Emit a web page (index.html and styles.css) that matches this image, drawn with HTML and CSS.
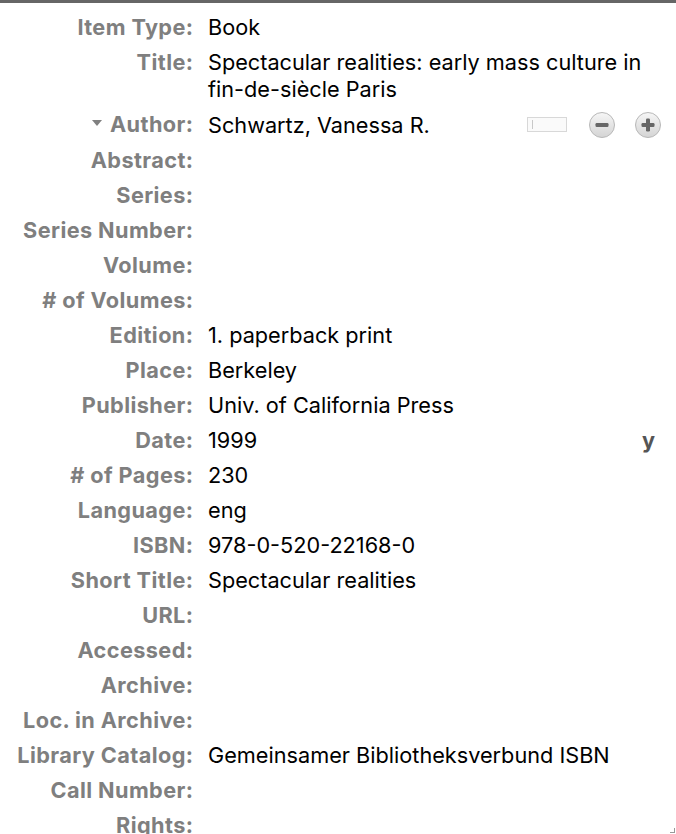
FILE: index.html
```html
<!DOCTYPE html>
<html>
<head>
<meta charset="utf-8">
<link rel="stylesheet" href="styles.css">
</head>
<body>
<div class="pane">
  <div class="fields">
    <div class="label">Item Type:</div><div class="value">Book</div>
    <div class="label">Title:</div><div class="value">Spectacular realities: early mass culture in <span class="nowrap">fin-de-siècle</span> Paris</div>
    <div class="label"><span class="twisty"></span>Author:</div>
    <div class="value author">
      <span class="name">Schwartz, Vanessa R.</span>
      <span class="mode"><span class="caret"></span></span>
      <span class="circle-btn">
        <svg viewBox="0 0 28 28" width="28" height="28"><defs><linearGradient id="g1" x1="0" y1="0" x2="0" y2="1"><stop offset="0" stop-color="#f6f6f6"/><stop offset="1" stop-color="#d4d4d4"/></linearGradient></defs><circle cx="14" cy="14" r="12.5" fill="url(#g1)" stroke="#b8b8b8"/><rect x="7.5" y="12" width="13" height="4" rx="1.2" fill="#666"/></svg>
      </span>
      <span class="circle-btn">
        <svg viewBox="0 0 28 28" width="28" height="28"><defs><linearGradient id="g2" x1="0" y1="0" x2="0" y2="1"><stop offset="0" stop-color="#f6f6f6"/><stop offset="1" stop-color="#d4d4d4"/></linearGradient></defs><circle cx="14" cy="14" r="12.5" fill="url(#g2)" stroke="#b8b8b8"/><rect x="7.5" y="12" width="13" height="4" rx="1.2" fill="#666"/><rect x="12" y="7.5" width="4" height="13" rx="1.2" fill="#666"/></svg>
      </span>
    </div>
    <div class="label">Abstract:</div><div class="value"></div>
    <div class="label">Series:</div><div class="value"></div>
    <div class="label">Series Number:</div><div class="value"></div>
    <div class="label">Volume:</div><div class="value"></div>
    <div class="label"># of Volumes:</div><div class="value"></div>
    <div class="label">Edition:</div><div class="value">1. paperback print</div>
    <div class="label">Place:</div><div class="value">Berkeley</div>
    <div class="label">Publisher:</div><div class="value">Univ. of California Press</div>
    <div class="label">Date:</div><div class="value date"><span>1999</span><span class="ymd">y</span></div>
    <div class="label"># of Pages:</div><div class="value">230</div>
    <div class="label">Language:</div><div class="value">eng</div>
    <div class="label">ISBN:</div><div class="value">978-0-520-22168-0</div>
    <div class="label">Short Title:</div><div class="value">Spectacular realities</div>
    <div class="label">URL:</div><div class="value"></div>
    <div class="label">Accessed:</div><div class="value"></div>
    <div class="label">Archive:</div><div class="value"></div>
    <div class="label">Loc. in Archive:</div><div class="value"></div>
    <div class="label">Library Catalog:</div><div class="value">Gemeinsamer Bibliotheksverbund ISBN</div>
    <div class="label">Call Number:</div><div class="value"></div>
    <div class="label">Rights:</div><div class="value"></div>
  </div>
  <span class="grip"></span>
</div>
</body>
</html>
```
FILE: styles.css
```css
html, body {
  margin: 0;
  padding: 0;
  background: #fff;
}
body {
  width: 676px;
  height: 834px;
  overflow: hidden;
  font-family: Inter, "Liberation Sans", Arial, sans-serif;
  font-size: 21.7px;
}
.pane {
  position: relative;
  height: 834px;
  box-sizing: border-box;
  border-top: 3px solid #666;
  padding: 7px 14px 0 0;
}
.fields {
  display: grid;
  grid-template-columns: 193px 1fr;
  column-gap: 15px;
}
.label, .value {
  padding: 4px 0;
  line-height: 27px;
  min-height: 27px;
}
.label {
  text-align: right;
  font-weight: bold;
  color: #7f7f7f;
  white-space: nowrap;
  letter-spacing: 0.4px;
  margin-right: -0.4px;
}
.value {
  color: #000;
}
.nowrap {
  white-space: nowrap;
}
.twisty {
  display: inline-block;
  width: 0;
  height: 0;
  border-left: 5px solid transparent;
  border-right: 5px solid transparent;
  border-top: 6px solid #808080;
  vertical-align: middle;
  margin-right: 8px;
  position: relative;
  top: -3px;
}
.author {
  display: flex;
  align-items: center;
}
.author .name {
  flex: 1;
}
.mode {
  width: 38px;
  height: 13px;
  border: 1px solid #d8d8d8;
  background: #fafafa;
  margin-right: 3px;
  position: relative;
  top: -1px;
}
.caret {
  display: block;
  width: 1px;
  height: 9px;
  background: #c8c8c8;
  margin: 2px 0 0 4px;
}
.circle-btn {
  width: 28px;
  height: 28px;
  display: block;
  margin-left: 18px;
}
.circle-btn svg {
  display: block;
}
.date {
  display: flex;
  justify-content: space-between;
}
.ymd {
  font-weight: bold;
  color: #555;
  margin-right: 7px;
}
.grip {
  position: absolute;
  right: 1px;
  bottom: 1px;
  width: 4px;
  height: 4px;
  border-right: 1px solid #999;
  border-bottom: 1px solid #999;
}
```
